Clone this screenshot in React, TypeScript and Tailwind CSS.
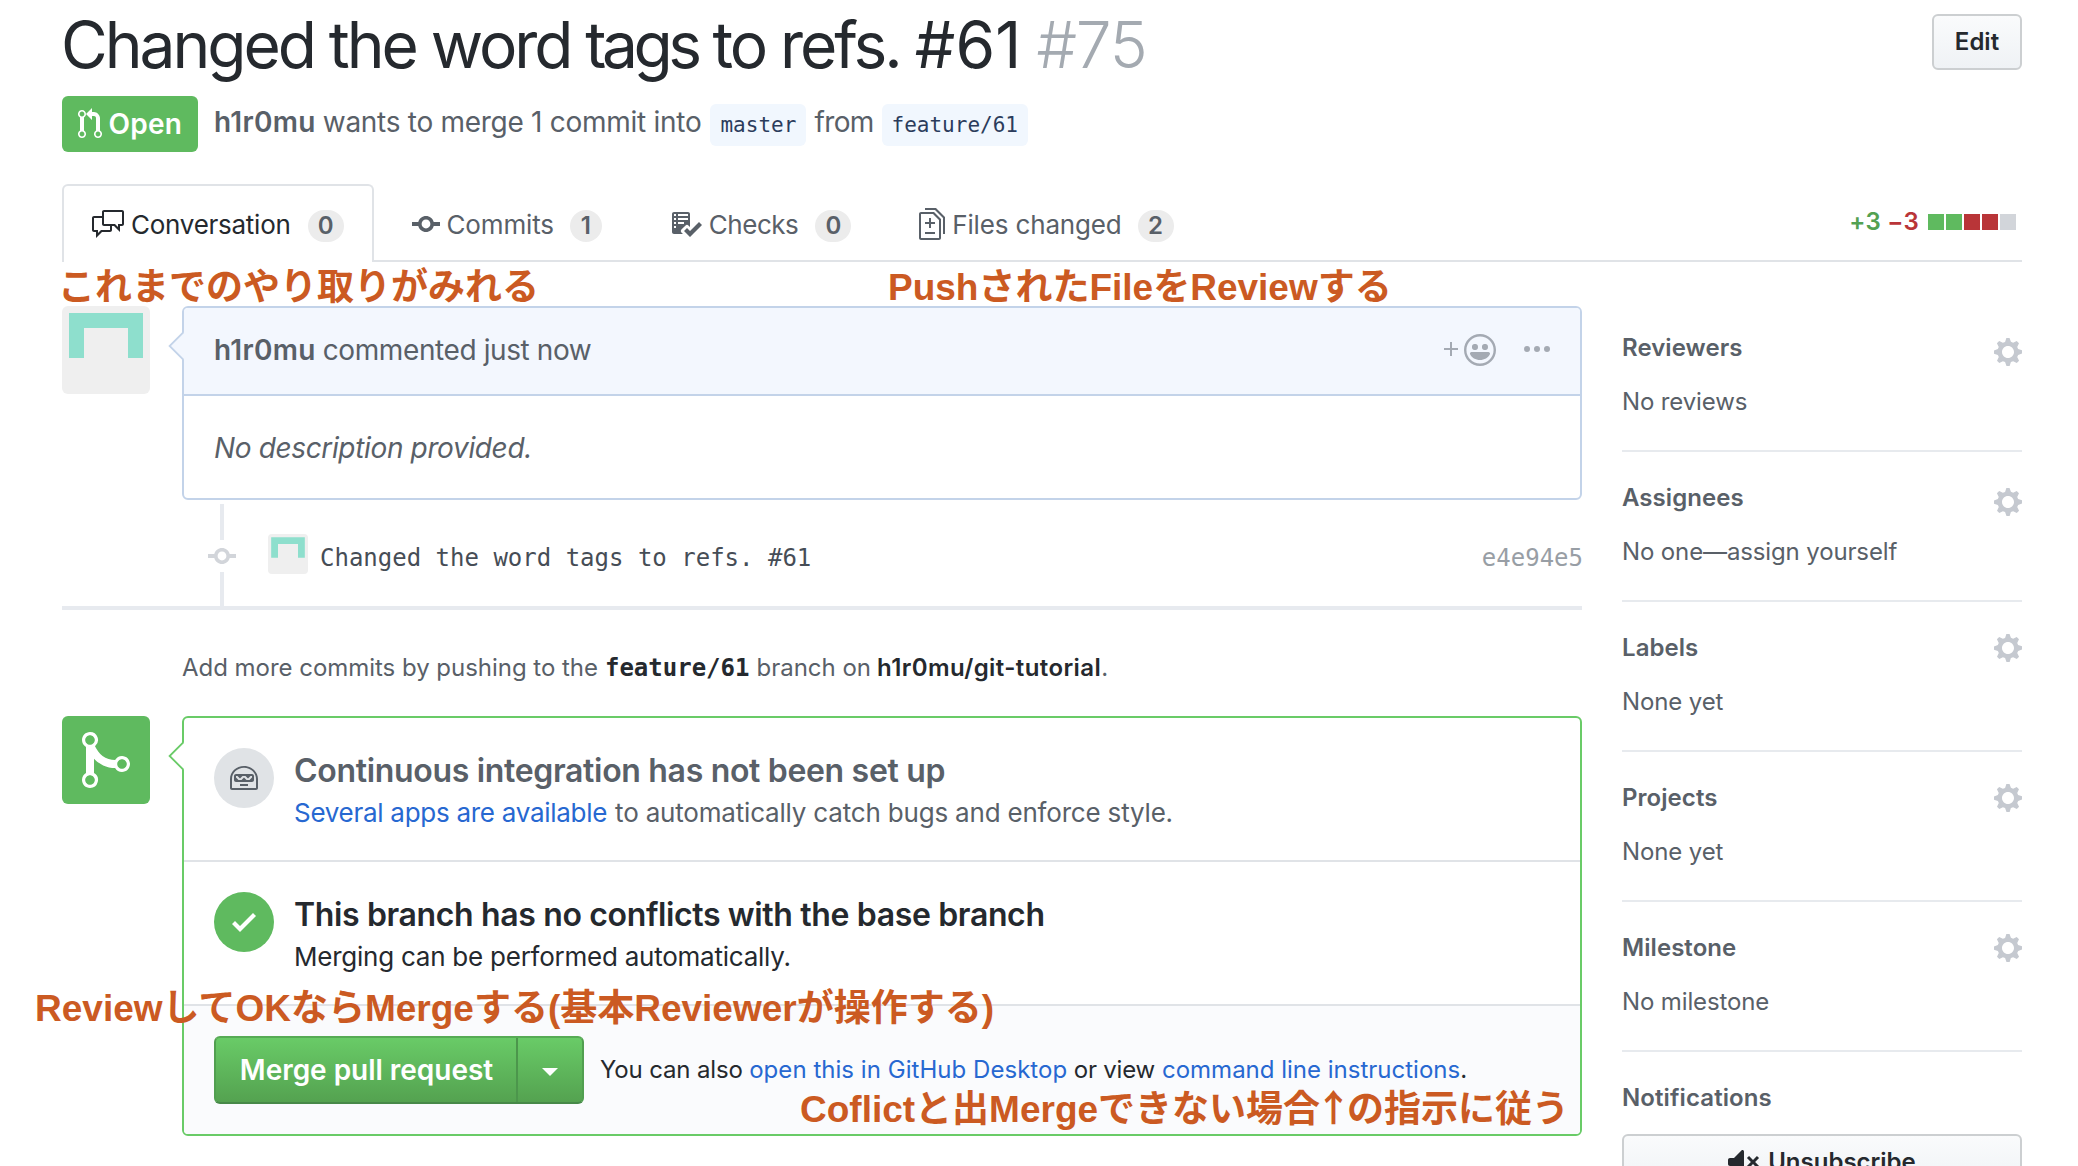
import type { ReactNode } from "react";

/* ---------- Icons (16-unit grid, drawn at double size) ---------- */

type IconName =
  | "pullRequest"
  | "discussion"
  | "commit"
  | "checklist"
  | "diff"
  | "gear"
  | "smiley"
  | "plus"
  | "merge"
  | "robot"
  | "check"
  | "mute";

const icons: Record<IconName, { w: number; d: string }> = {
  pullRequest: {
    w: 12,
    d: "M11 11.28V5c-.03-.78-.34-1.47-.94-2.06C9.46 2.35 8.78 2.03 8 2H7V0L4 3l3 3V4h1c.27.02.48.11.69.31.21.2.3.42.31.69v6.28A1.993 1.993 0 0 0 10 15a1.993 1.993 0 0 0 1-3.72zm-1 2.92c-.66 0-1.2-.55-1.2-1.2 0-.65.55-1.2 1.2-1.2.65 0 1.2.55 1.2 1.2 0 .65-.55 1.2-1.2 1.2zM4 3c0-1.11-.89-2-2-2a1.993 1.993 0 0 0-1 3.72v6.56A1.993 1.993 0 0 0 2 15a1.993 1.993 0 0 0 1-3.72V4.72c.59-.34 1-.98 1-1.72zm-.8 10c0 .66-.55 1.2-1.2 1.2-.65 0-1.2-.55-1.2-1.2 0-.65.55-1.2 1.2-1.2.65 0 1.2.55 1.2 1.2zM2 4.2C1.34 4.2.8 3.65.8 3c0-.65.55-1.2 1.2-1.2.65 0 1.2.55 1.2 1.2 0 .65-.55 1.2-1.2 1.2z",
  },
  discussion: {
    w: 16,
    d: "M15 1H6c-.55 0-1 .45-1 1v2H1c-.55 0-1 .45-1 1v6c0 .55.45 1 1 1h1v3l3-3h4c.55 0 1-.45 1-1V9h1l3 3V9h1c.55 0 1-.45 1-1V2c0-.55-.45-1-1-1zM9 11H4.5L3 12.5V11H1V5h4v3c0 .55.45 1 1 1h3v2zm6-3h-2v1.5L11.5 8H6V2h9v6z",
  },
  commit: {
    w: 14,
    d: "M10.86 7c-.45-1.72-2-3-3.86-3-1.86 0-3.41 1.28-3.86 3H0v2h3.14c.45 1.72 2 3 3.86 3 1.86 0 3.41-1.28 3.86-3H14V7h-3.14zM7 10.2c-1.22 0-2.2-.98-2.2-2.2 0-1.22.98-2.2 2.2-2.2 1.22 0 2.2.98 2.2 2.2 0 1.22-.98 2.2-2.2 2.2z",
  },
  checklist: {
    w: 16,
    d: "M16 8.5l-6 6-3-3L8.5 10l1.5 1.5L14.5 7 16 8.5zM5.7 12.2l.8.8H2c-.55 0-1-.45-1-1V3c0-.55.45-1 1-1h7c.55 0 1 .45 1 1v6.5l-.8-.8c-.39-.39-1.03-.39-1.42 0L5.7 10.8a.996.996 0 0 0 0 1.41v-.01zM4 4h5V3H4v1zm0 2h5V5H4v1zm0 2h3V7H4v1zM3 9H2v1h1V9zm0-2H2v1h1V7zm0-2H2v1h1V5zm0-2H2v1h1V3z",
  },
  diff: {
    w: 13,
    d: "M6 7h2v1H6v2H5V8H3V7h2V5h1v2zm-3 6h5v-1H3v1zM7.5 2L11 5.5V15c0 .55-.45 1-1 1H1c-.55 0-1-.45-1-1V3c0-.55.45-1 1-1h6.5zM10 6L7 3H1v12h9V6zM8.5 0H3v1h5l4 4v8h1V4.5L8.5 0z",
  },
  gear: {
    w: 14,
    d: "M14 8.77v-1.6l-1.94-.64-.45-1.09.88-1.84-1.13-1.13-1.81.91-1.09-.45-.69-1.92h-1.6l-.63 1.94-1.11.45-1.84-.88-1.13 1.13.91 1.81-.45 1.09L0 7.23v1.59l1.94.64.45 1.09-.88 1.84 1.13 1.13 1.81-.91 1.09.45.69 1.92h1.59l.63-1.94 1.11-.45 1.84.88 1.13-1.13-.92-1.81.47-1.09L14 8.75v.02zM7 11c-1.66 0-3-1.34-3-3s1.34-3 3-3 3 1.34 3 3-1.34 3-3 3z",
  },
  smiley: {
    w: 16,
    d: "M8 0C3.58 0 0 3.58 0 8s3.58 8 8 8 8-3.58 8-8-3.58-8-8-8zm4.81 12.81a6.72 6.72 0 0 1-2.17 1.45c-.83.36-1.72.53-2.64.53-.92 0-1.81-.17-2.64-.53-.81-.34-1.55-.83-2.17-1.45a6.773 6.773 0 0 1-1.45-2.17A6.59 6.59 0 0 1 1.21 8c0-.92.17-1.81.53-2.64.34-.81.83-1.55 1.45-2.17.62-.62 1.36-1.11 2.17-1.45A6.59 6.59 0 0 1 8 1.21c.92 0 1.81.17 2.64.53.81.34 1.55.83 2.17 1.45.62.62 1.11 1.36 1.45 2.17.36.83.53 1.72.53 2.64 0 .92-.17 1.81-.53 2.64-.34.81-.83 1.55-1.45 2.17zM4 6.8v-.59c0-.66.53-1.19 1.2-1.19h.59c.66 0 1.19.53 1.19 1.19v.59c0 .67-.53 1.2-1.19 1.2H5.2C4.53 8 4 7.47 4 6.8zm5 0v-.59c0-.66.53-1.19 1.2-1.19h.59c.66 0 1.19.53 1.19 1.19v.59c0 .67-.53 1.2-1.19 1.2h-.59C9.53 8 9 7.47 9 6.8zm4 3.2c-.72 1.88-2.91 3-5 3s-4.28-1.13-5-3c-.14-.39.23-1 .66-1h8.59c.41 0 .89.61.75 1z",
  },
  plus: { w: 7, d: "M4 7V4H3v3H0v1h3v3h1V8h3V7H4z" },
  merge: {
    w: 12,
    d: "M10 7c-.73 0-1.38.41-1.73 1.02V8C7.22 7.98 6 7.64 5.14 6.98c-.75-.58-1.5-1.61-1.89-2.44A1.993 1.993 0 0 0 2 .99C.89.99 0 1.89 0 3a2 2 0 0 0 1 1.72v6.56c-.59.35-1 .99-1 1.72 0 1.11.89 2 2 2a1.993 1.993 0 0 0 1-3.72V7.67c.67.7 1.44 1.27 2.3 1.69.86.42 2.03.63 2.97.64v-.02c.36.61 1 1.02 1.73 1.02 1.11 0 2-.89 2-2 0-1.11-.89-2-2-2zm-6.8 6c0 .66-.55 1.2-1.2 1.2-.65 0-1.2-.55-1.2-1.2 0-.65.55-1.2 1.2-1.2.65 0 1.2.55 1.2 1.2zM2 4.2C1.34 4.2.8 3.65.8 3c0-.65.55-1.2 1.2-1.2.65 0 1.2.55 1.2 1.2 0 .65-.55 1.2-1.2 1.2zm8 6c-.66 0-1.2-.55-1.2-1.2 0-.65.55-1.2 1.2-1.2.65 0 1.2.55 1.2 1.2 0 .65-.55 1.2-1.2 1.2z",
  },
  robot: {
    w: 14,
    d: "M3 6c-.55 0-1 .45-1 1v2c0 .55.45 1 1 1h8c.55 0 1-.45 1-1V7c0-.55-.45-1-1-1H3zm8 1.75L9.75 9h-1.5L7 7.75 5.75 9h-1.5L3 7.75V7h.75L5 8.25 6.25 7h1.5L9 8.25 10.25 7H11v.75zM5 11h4v1H5v-1zm2-9C3.14 2 0 4.91 0 8.5V13c0 .55.45 1 1 1h12c.55 0 1-.45 1-1V8.5C14 4.91 10.86 2 7 2zm6 11H1V8.5c0-3.09 2.64-5.59 6-5.59s6 2.5 6 5.59V13z",
  },
  check: { w: 12, d: "M12 5l-8 8-4-4 1.5-1.5L4 10l6.5-6.5L12 5z" },
  mute: {
    w: 16,
    d: "M8 2.81v10.38c0 .67-.81 1-1.28.53L3 10H1c-.55 0-1-.45-1-1V7c0-.55.45-1 1-1h2l3.72-3.72C7.19 1.81 8 2.14 8 2.81zm7.53 3.22l-1.06-1.06-1.97 1.97-1.97-1.97-1.06 1.06L11.44 8 9.47 9.97l1.06 1.06 1.97-1.97 1.97 1.97 1.06-1.06L13.56 8l1.97-1.97z",
  },
};

function Icon({ name, scale = 2, className = "" }: { name: IconName; scale?: number; className?: string }) {
  const { w, d } = icons[name];
  return (
    <svg width={w * scale} height={16 * scale} viewBox={`0 0 ${w} 16`} fill="currentColor" className={`shrink-0 ${className}`}>
      <path fillRule="evenodd" d={d} />
    </svg>
  );
}

function Avatar({ className }: { className: string }) {
  return (
    <svg viewBox="0 0 88 88" className={`shrink-0 bg-[#efefef] ${className}`}>
      <path fill="#8edfcd" d="M7 7h74v45H66V22H22v30H7z" />
    </svg>
  );
}

/* ---------- Small pieces ---------- */

function Counter({ children, className = "" }: { children: ReactNode; className?: string }) {
  return (
    <span
      className={`mt-1 flex h-8 items-center justify-center rounded-full bg-[#ececec] text-2xl leading-8 font-semibold text-[#596068] ${className}`}
    >
      {children}
    </span>
  );
}

function BranchName({ children, className = "" }: { children: ReactNode; className?: string }) {
  return (
    <span
      className={`mt-[2px] flex h-[42px] items-center justify-center rounded-md bg-[#f1f7fe] font-['DejaVu_Sans_Mono',monospace] text-[21px] text-[#2b3c5c] ${className}`}
    >
      {children}
    </span>
  );
}

function Pointer({ fill, stroke }: { fill: string; stroke: string }) {
  return (
    <svg width="16" height="30" viewBox="0 0 16 30" className="absolute top-[23px] -left-4">
      <path d="M16 1 1.2 15 16 29z" fill={fill} />
      <path d="M15.5 1.2 1.6 15l13.9 13.8" fill="none" stroke={stroke} strokeWidth="1.8" />
    </svg>
  );
}

function SidebarSection({ title, value, gear }: { title: string; value: string; gear: string }) {
  return (
    <section className="flex h-[150px] justify-between border-b-2 border-[#e7eaee] text-2xl leading-9 text-[#596068]">
      <div className="flex flex-col gap-[18px] pt-7">
        <h3 className="font-semibold tracking-[0.06px]">{title}</h3>
        <p className="tracking-[-0.13px]">{value}</p>
      </div>
      <Icon name="gear" className={`text-[#c5c9d0] ${gear}`} />
    </section>
  );
}

function Annotation({ children, className }: { children: ReactNode; className: string }) {
  return (
    <p
      className={`absolute font-['Liberation_Sans','Noto_Sans_CJK_JP',sans-serif] text-[37px] leading-10 font-bold whitespace-nowrap text-[#cb5a22] ${className}`}
    >
      {children}
    </p>
  );
}

/* ---------- Page sections ---------- */

function Header() {
  return (
    <header>
      <div className="flex h-24 items-start justify-between">
        <h1 className="-ml-px flex pt-[9px] text-[64px] leading-[72px] whitespace-nowrap">
          <span className="tracking-[-3.04px]">
            Changed the word <span className="tracking-[-4.5px]">tags</span> to refs.{" "}
            <span className="tracking-[0.2px]">#61</span>
          </span>
          <span className="ml-[15px] font-light tracking-[-1.2px] text-[#a4aab1]">#75</span>
        </h1>
        <button className="mt-[14px] h-14 w-[90px] rounded-md border-2 border-[#cccfd1] bg-linear-to-b from-[#fafbfc] to-[#eff2f5] text-2xl leading-[50px] font-semibold">
          Edit
        </button>
      </div>
      <div className="flex h-14 items-center text-[28px] leading-10 whitespace-nowrap text-[#596068]">
        <span className="flex h-14 w-[136px] items-center rounded-md bg-[#5fba5f] pl-4 font-semibold text-white">
          <Icon name="pullRequest" />
          <span className="ml-[6.5px] tracking-[0.2px]">Open</span>
        </span>
        <span className="-mt-[5px] ml-4 font-semibold tracking-[0.32px]">h1r0mu</span>
        <span className="-mt-[5px] ml-[7px] tracking-[-0.28px]">wants to merge 1 commit into</span>
        <BranchName className="ml-[9px] w-24">master</BranchName>
        <span className="-mt-[5px] ml-2 tracking-[-0.6px]">from</span>
        <BranchName className="ml-2 w-[146px]">feature/61</BranchName>
      </div>
    </header>
  );
}

function Tabs() {
  return (
    <nav className="mt-8 flex h-[78px] text-[26px] leading-9 whitespace-nowrap text-[#596068]">
      <a className="flex w-[312px] items-center rounded-t-md border-2 border-b-0 border-[#e0e3e7] pl-7 text-[#25292e]">
        <Icon name="discussion" />
        <span className="mt-[2px] ml-[7px] tracking-[-0.26px]">Conversation</span>
        <Counter className="ml-[17px] w-9">0</Counter>
      </a>
      <div className="flex flex-1 items-center border-b-2 border-[#e0e3e7] pt-[4px] pl-[38px]">
        <Icon name="commit" />
        <span className="mt-[2px] ml-[6.5px] tracking-[-0.16px]">Commits</span>
        <Counter className="ml-4 w-8">1</Counter>
        <Icon name="checklist" className="ml-[68px]" />
        <span className="mt-[2px] ml-[7px] tracking-[-0.48px]">Checks</span>
        <Counter className="ml-[17px] w-9">0</Counter>
        <Icon name="diff" className="ml-[68px]" />
        <span className="mt-[2px] ml-[7px] tracking-[-0.16px]">Files changed</span>
        <Counter className="ml-4 w-9">2</Counter>
        <div className="mr-[6px] ml-auto flex items-center text-2xl font-semibold">
          <span className="-mt-[4px] tracking-[0.3px] text-[#53a151]">+3</span>
          <span className="-mt-[4px] ml-[6px] tracking-[0.3px] text-[#b93538]">−3</span>
          <span className="-mt-[4px] ml-[9px] flex gap-[2px]">
            <i className="size-4 bg-[#5fba5f]" />
            <i className="size-4 bg-[#5fba5f]" />
            <i className="size-4 bg-[#b93538]" />
            <i className="size-4 bg-[#b93538]" />
            <i className="size-4 bg-[#d2d5da]" />
          </span>
        </div>
      </div>
    </nav>
  );
}

function Comment() {
  return (
    <div className="flex">
      <Avatar className="size-[88px] rounded-md" />
      <article className="relative ml-8 h-[194px] w-[1400px] rounded-md border-2 border-[#c3d3e9] text-[28px] leading-10 text-[#596068]">
        <Pointer fill="#f3f7fe" stroke="#c3d3e9" />
        <div className="flex h-[88px] items-center rounded-t-[4px] border-b-2 border-[#c3d3e9] bg-[#f3f7fe] pl-[30px] whitespace-nowrap">
          <span className="-mt-[2px] font-semibold tracking-[0.32px]">h1r0mu</span>
          <span className="-mt-[2px] ml-[7px] tracking-[-0.4px]">commented just now</span>
          <span className="mr-[30px] ml-auto flex items-center text-[#a4aab3]">
            <Icon name="plus" className="-mt-[2px]" />
            <Icon name="smiley" className="-mt-[2px] ml-[6px]" />
            <svg width="26" height="6" viewBox="0 0 26 6" fill="currentColor" className="-mt-1 ml-7">
              <circle cx="3" cy="3" r="3" />
              <circle cx="13" cy="3" r="3" />
              <circle cx="23" cy="3" r="3" />
            </svg>
          </span>
        </div>
        <p className="pt-8 pl-[30px] tracking-[-0.36px] italic">No description provided.</p>
      </article>
    </div>
  );
}

function CommitRow() {
  return (
    <div className="flex h-[110px] border-b-4 border-[#e7eaef] font-['DejaVu_Sans_Mono',monospace] text-2xl leading-9">
      <div className="ml-[146px] flex w-7 flex-col items-center pt-1">
        <i className="h-9 w-1 bg-[#e7eaef]" />
        <Icon name="commit" className="text-[#d2d5da]" />
        <i className="w-1 flex-1 bg-[#e7eaef]" />
      </div>
      <Avatar className="mt-[34px] ml-8 size-10 rounded" />
      <span className="mt-10 ml-3 text-[#464d56]">Changed the word tags to refs. #61</span>
      <span className="mt-10 -mr-px ml-auto text-[#989ea5]">e4e94e5</span>
    </div>
  );
}

function PushHint() {
  return (
    <p className="mt-10 mb-[30px] ml-[120px] flex h-9 text-2xl leading-9 whitespace-nowrap text-[#596068]">
      <span className="tracking-[-0.03px]">Add more commits by pushing to the</span>
      <b className="ml-[7px] font-['DejaVu_Sans_Mono',monospace] text-[#25292e]">feature/61</b>
      <span className="ml-[7px]">branch on</span>
      <b className="ml-[6px] font-semibold tracking-[0.4px] text-[#25292e]">h1r0mu/git-tutorial</b>
      <span>.</span>
    </p>
  );
}

function MergeBox() {
  return (
    <div className="flex">
      <span className="flex size-[88px] items-center rounded-md bg-[#5fba5f] pl-5 text-white">
        <Icon name="merge" scale={4} />
      </span>
      <section className="relative ml-8 flex h-[420px] w-[1400px] flex-col rounded-md border-2 border-[#69cb67] text-[26px] leading-10 whitespace-nowrap">
        <Pointer fill="#ffffff" stroke="#69cb67" />
        <div className="flex h-36 border-b-2 border-[#e0e3e7] pt-[30px] pl-[30px] text-[#596068]">
          <span className="flex size-[60px] items-center justify-center rounded-full bg-[#e0e3e6]">
            <Icon name="robot" />
          </span>
          <div className="ml-5 flex flex-col gap-[2px] pt-[3px]">
            <h4 className="text-[32px] font-semibold tracking-[-0.32px]">Continuous integration has not been set up</h4>
            <p className="flex">
              <a className="tracking-[-0.28px] text-[#2768d1]">Several apps are available</a>
              <span className="ml-2 tracking-[-0.19px]">to automatically catch bugs and enforce style.</span>
            </p>
          </div>
        </div>
        <div className="flex h-36 border-b-2 border-[#e0e3e7] pt-[30px] pl-[30px]">
          <span className="flex size-[60px] items-center justify-center rounded-full bg-[#5fba5f] text-white">
            <Icon name="check" />
          </span>
          <div className="ml-5 flex flex-col gap-[2px] pt-[3px]">
            <h4 className="text-[32px] font-semibold tracking-[-0.36px]">This branch has no conflicts with the base branch</h4>
            <p className="tracking-[-0.24px]">Merging can be performed automatically.</p>
          </div>
        </div>
        <div className="flex flex-1 items-center rounded-b-[4px] bg-[#fafbfd] pl-[30px] text-2xl">
          <div className="flex h-[68px] w-[370px] overflow-hidden rounded-md border-2 border-t-[#56ab55] border-r-[#519f50] border-b-[#478949] border-l-[#519f50] bg-linear-to-b from-[#69cb67] to-[#54a250] text-[28px] font-semibold text-white">
            <button className="w-[302px] border-r-2 border-[#4c964c] pt-px pl-px tracking-[-0.03px]">Merge pull request</button>
            <button className="flex flex-1 items-center justify-center" aria-label="Merge options">
              <svg width="16" height="8" viewBox="0 0 16 8" fill="currentColor" className="mt-1">
                <path d="M0 0h16L8 8z" />
              </svg>
            </button>
          </div>
          <p className="ml-4 flex">
            <span className="tracking-[-0.15px]">You can also</span>
            <a className="ml-[6.5px] tracking-[0.04px] text-[#2768d1]">open this in GitHub Desktop</a>
            <span className="ml-[6.5px] tracking-[-0.2px]">or view</span>
            <a className="ml-[7px] text-[#2768d1]">command line instructions</a>
            <span>.</span>
          </p>
        </div>
      </section>
    </div>
  );
}

function Sidebar() {
  return (
    <aside className="-mt-1 ml-10 w-[400px]">
      <SidebarSection title="Reviewers" value="No reviews" gear="mt-[34px]" />
      <SidebarSection title="Assignees" value="No one—assign yourself" gear="mt-[34px]" />
      <SidebarSection title="Labels" value="None yet" gear="mt-[30px]" />
      <SidebarSection title="Projects" value="None yet" gear="mt-[30px]" />
      <SidebarSection title="Milestone" value="No milestone" gear="mt-[30px]" />
      <section className="pt-7 text-2xl leading-9 font-semibold">
        <h3 className="tracking-[0.1px] text-[#596068]">Notifications</h3>
        <button className="mt-[18px] flex h-14 w-full items-center justify-center rounded-md border-2 border-[#cccfd1] bg-linear-to-b from-[#fafbfc] to-[#eff2f5]">
          <Icon name="mute" />
          <span className="ml-2">Unsubscribe</span>
        </button>
      </section>
    </aside>
  );
}

export default function App() {
  return (
    <div className="relative h-[1166px] w-[2078px] overflow-hidden bg-white font-[Inter,sans-serif] text-[#25292e]">
      <div className="pr-14 pl-[62px]">
        <Header />
        <Tabs />
        <div className="mt-11 flex">
          <main className="w-[1520px]">
            <Comment />
            <CommitRow />
            <PushHint />
            <MergeBox />
          </main>
          <Sidebar />
        </div>
      </div>
      <Annotation className="top-[268px] left-[58px]">これまでのやり取りがみれる</Annotation>
      <Annotation className="top-[268px] left-[888px]">PushされたFileをReviewする</Annotation>
      <Annotation className="top-[989px] left-[35px]">ReviewしてOKならMergeする(基本Reviewerが操作する)</Annotation>
      <Annotation className="top-[1086px] left-[800px]">
        Coflictと出Mergeできない場合
        <span className="-mx-[5px] font-['Noto_Sans_CJK_JP',sans-serif]">↑</span>の指示に従う
      </Annotation>
    </div>
  );
}
